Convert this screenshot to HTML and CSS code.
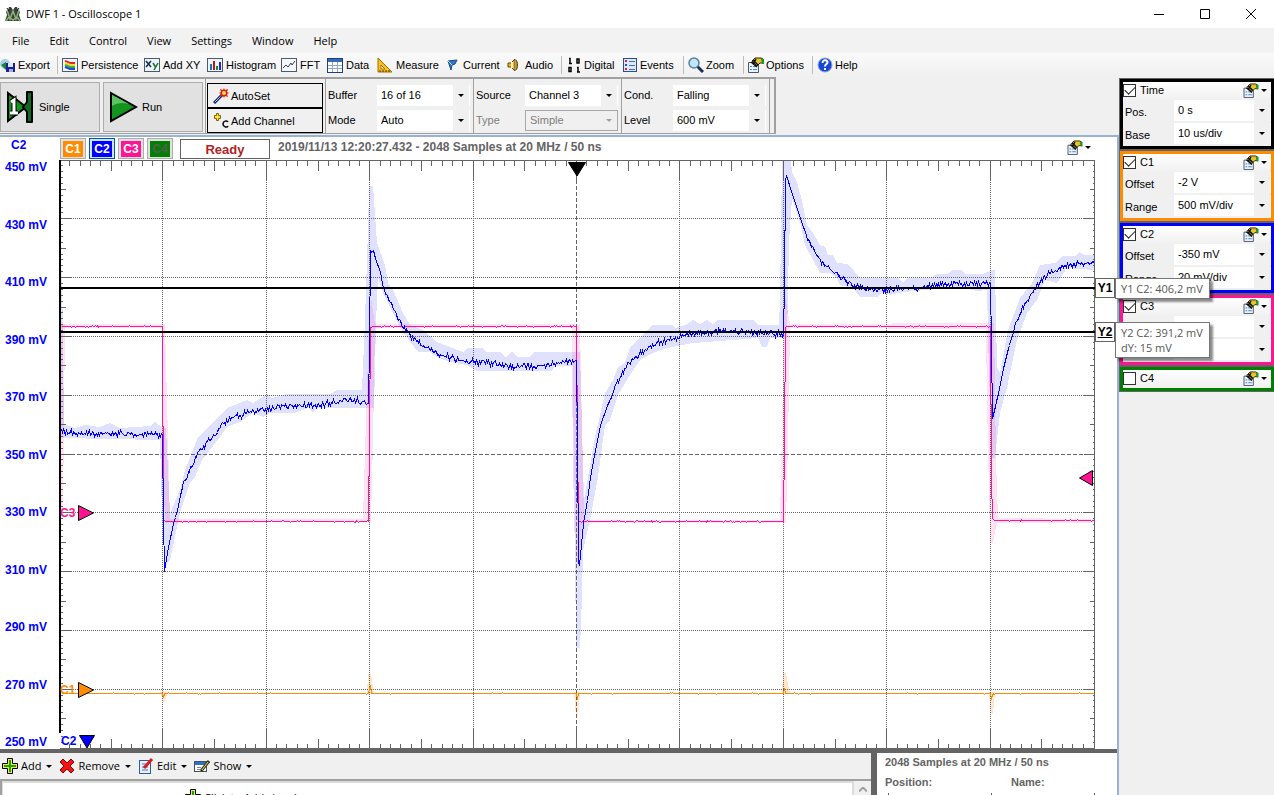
FILE: index.html
```html
<!DOCTYPE html>
<html lang="en">
<head>
<meta charset="utf-8">
<title>DWF 1 - Oscilloscope 1</title>
<link rel="stylesheet" href="styles.css">
</head>
<body>
<svg class="defs" aria-hidden="true">
  <symbol id="i-options" viewBox="0 0 16 16">
    <path d="M.5 5.500h10v10H.5z" fill="#e9f1fb" stroke="#4c5866"/>
    <path d="M2 9.500h2M2 12.500h2M5 9.500h4M5 12.500h4" stroke="#4a86c8"/>
    <path d="M4 4l3-3h6l2 1v4h-3L9 9z" fill="#e9c52b" stroke="#2c2606"/>
    <path d="M3 5l6 5M5 3l5 5M8 2l-3 5" stroke="#111" stroke-width="1.500"/><path d="M13 2h3v5h-2z" fill="#1b9a2c"/>
  </symbol>
  <symbol id="i-plus" viewBox="0 0 16 16">
    <path d="M5.500.500h5v5h5v5h-5v5h-5v-5h-5v-5h5z" fill="#f7e64a" stroke="#000"/>
    <path d="M7 2h2v5h5v2H9v5H7V9H2V7h5z" fill="#12a512"/>
  </symbol>
</svg>

<header class="titlebar">
  <svg class="app-icon" viewBox="0 0 16 16"><path d="M4 1h2l2 3 2-3h2l1 3 2 2-1 3 2 6H0l2-6-1-3 2-2z" fill="#39423a"/><path d="M2 4l3 9 3-8 3 8 3-9M1 15l3-4 4 3 4-3 3 4" fill="none" stroke="#8cb07c" stroke-width="1.500"/><path d="M2 2l2 3M14 2l-2 3" stroke="#111"/></svg>
  <h1 class="title">DWF 1 - Oscilloscope 1</h1>
  <button class="win-btn" aria-label="Minimize"><svg viewBox="0 0 10 10"><path d="M0 5.500h10"/></svg></button>
  <button class="win-btn" aria-label="Maximize"><svg viewBox="0 0 10 10"><path d="M.500.500h9v9h-9z"/></svg></button>
  <button class="win-btn" aria-label="Close"><svg viewBox="0 0 10 10"><path d="M0 0l10 10M10 0L0 10"/></svg></button>
</header>

<nav class="menubar">
  <button>File</button><button>Edit</button><button>Control</button><button>View</button><button>Settings</button><button>Window</button><button>Help</button>
</nav>

<div class="toolbar">
  <button class="tool tool-export"><svg viewBox="0 0 16 16"><circle cx="5" cy="7" r="5" fill="#a9cfe8"/><path d="M1 8l5-3v3h3v2H6v3z" fill="#18852b"/><rect x="6" y="6" width="9" height="9" fill="#16219a"/><rect x="8" y="6" width="5" height="4" fill="#dfe6fa"/><rect x="9" y="12" width="4" height="3" fill="#a8b0c8"/></svg>Export</button>
  <button class="tool sep tool-persistence"><svg viewBox="0 0 16 16"><rect x=".5" y="1.500" width="15" height="13" fill="#f4f6fb" stroke="#4c5a70"/><path d="M3 4l5 2h5" stroke="#e22" stroke-width="2" fill="none"/><path d="M3 6l5 2h5" stroke="#f5df28" stroke-width="2" fill="none"/><path d="M3 8l5 2h5" stroke="#2ab43c" stroke-width="2" fill="none"/><path d="M3 10l5 2h5" stroke="#2544e0" stroke-width="2" fill="none"/></svg>Persistence</button>
  <button class="tool tool-xy"><svg viewBox="0 0 16 16"><rect x=".5" y="1.500" width="15" height="13" fill="#eef4fb" stroke="#4c5a70"/><path d="M2 4l5 6M7 4l-5 6" stroke="#152a5c" stroke-width="1.500"/><path d="M9 6l2.500 4M14 6l-4 7" stroke="#1c6e20" stroke-width="1.500"/></svg>Add XY</button>
  <button class="tool tool-histogram"><svg viewBox="0 0 16 16"><rect x=".5" y="1.500" width="15" height="13" fill="#eef4fb" stroke="#4c5a70"/><rect x="3" y="7" width="2" height="6" fill="#17a"/><rect x="6" y="4" width="2" height="9" fill="#c11"/><rect x="9" y="9" width="2" height="4" fill="#183"/><rect x="12" y="5" width="2" height="8" fill="#22c"/></svg>Histogram</button>
  <button class="tool tool-fft"><svg viewBox="0 0 16 16"><rect x=".5" y="1.500" width="15" height="13" fill="#f4f7fb" stroke="#4c5a70"/><path d="M2 11l3-3 2 2 3-4 1 2 3-4" fill="none" stroke="#36425c"/></svg>FFT</button>
  <button class="tool tool-data"><svg viewBox="0 0 16 16"><rect x=".5" y="1.500" width="15" height="14" fill="#fff" stroke="#1e3f78"/><rect x="1" y="2" width="14" height="3" fill="#3868b8"/><path d="M5.500 5v10M10.500 5v10M1 8.500h14M1 11.500h14" stroke="#93a9c9"/></svg>Data</button>
  <button class="tool tool-measure"><svg viewBox="0 0 16 16"><path d="M1 1l14 14H1z" fill="#f8c21c" stroke="#a86a00"/><path d="M4 8l4 4H4z" fill="#fff" stroke="#a86a00"/><path d="M3 15v-2M6 15v-2M9 15v-2M12 15v-2" stroke="#5b3a00"/></svg>Measure</button>
  <button class="tool tool-current"><svg viewBox="0 0 16 16"><path d="M3 4l9-1-2 4-3 1-1 5z" fill="#2f78c8" stroke="#174a87"/><path d="M3 4l4 4" stroke="#bcdcff"/></svg>Current</button>
  <button class="tool tool-audio"><svg viewBox="0 0 16 16"><path d="M1 6h3l4-4v12l-4-4H1z" fill="#f0b92c" stroke="#5b4208"/><path d="M5 5v6" stroke="#fff3b8" stroke-width="2"/><path d="M9 3c2 2 2 8 0 10" fill="#c98d10" stroke="#5b4208"/></svg>Audio</button>
  <button class="tool sep tool-digital"><svg viewBox="0 0 16 16"><path d="M3 1.500h1V6M3 6.500h3M11 2h2v4h-2zM3 10.500h2v4H3zM11 10.500h1V15M11 15h3" fill="none" stroke="#000" stroke-width="1.500"/></svg>Digital</button>
  <button class="tool tool-events"><svg viewBox="0 0 16 16"><rect x="1.500" y="1.500" width="13" height="13" fill="#dce9fa" stroke="#2c4f8c"/><path d="M3 4h2M3 12h2" stroke="#d22" stroke-width="2"/><path d="M3 8h2" stroke="#25b" stroke-width="2"/><path d="M7 4.500h6M7 8.500h6M7 12.500h6" stroke="#4a6ea8"/></svg>Events</button>
  <button class="tool sep tool-zoom"><svg viewBox="0 0 16 16"><path d="M9 9l6 6" stroke="#1d2f5a" stroke-width="3"/><circle cx="6" cy="6" r="5" fill="#bfe6fa" stroke="#5c7ea0" stroke-width="1.500"/></svg>Zoom</button>
  <button class="tool sep tool-options"><svg><use href="#i-options"/></svg>Options</button>
  <button class="tool sep tool-help"><svg viewBox="0 0 16 16"><circle cx="8" cy="8" r="7" fill="#1746d8" stroke="#8fa6d8"/><path d="M5.500 6c0-4 5-3 5-.5C10.500 7 8 7 8 9.500M8 11v2" fill="none" stroke="#fff" stroke-width="2"/></svg>Help</button>
</div>

<div class="workspace">
  <main class="left">
    <div class="controls">
      <div class="run-group">
        <button class="big-btn"><svg viewBox="0 0 30 34"><path d="M3 3l18 14L3 31z" fill="#14931f" stroke="#000" stroke-width="2"/><path d="M22 2h5v30h-5V22l-4-5 4-5z" fill="#0f6a1c" stroke="#000" stroke-width="2" stroke-linejoin="round"/><path d="M6 12l3-2v13M5 23h8" fill="none" stroke="#000" stroke-width="5"/><path d="M6 12l3-2v13M5 23h8" fill="none" stroke="#fff" stroke-width="3"/></svg>Single</button>
        <button class="big-btn"><svg viewBox="0 0 30 34"><path d="M3 3l25 14L3 31z" fill="#14931f" stroke="#000" stroke-width="2"/><path d="M4 5l17 9C14 12 9 13 4 16z" fill="#5ec265"/></svg>Run</button>
      </div>
      <div class="auto-group">
        <button class="mid-btn"><svg viewBox="0 0 16 16"><path d="M1 15l8-8" stroke="#19256b" stroke-width="3"/><path d="M2 14l6-6" stroke="#a8c4ff"/><path d="M11 0l1 2 3-1-1 3 2 1-2 1 1 3-3-1-1 2-1-2-3 1 1-3-2-1 2-1-1-3 3 1z" fill="#e21b1b"/><circle cx="11" cy="5" r="2" fill="#ffe838"/></svg>AutoSet</button>
        <button class="mid-btn"><svg viewBox="0 0 16 16"><path d="M3.500.500h2v2h2v3h-2v2h-2v-2h-2v-3h2z" fill="#ffe24a" stroke="#7c6400"/><path d="M15 9c-1-2-5-1-5 2s4 4 5 2" fill="none" stroke="#000" stroke-width="1.500"/></svg>Add Channel</button>
      </div>
      <div class="field-group">
        <label for="buffer">Buffer</label><span class="combo"><select id="buffer"><option>16 of 16</option></select></span>
        <label for="mode">Mode</label><span class="combo"><select id="mode"><option>Auto</option></select></span>
      </div>
      <div class="field-group">
        <label for="source">Source</label><span class="combo"><select id="source"><option>Channel 3</option></select></span>
        <label class="off" for="type">Type</label><span class="combo off"><select id="type" disabled><option>Simple</option></select></span>
      </div>
      <div class="field-group">
        <label for="cond">Cond.</label><span class="combo"><select id="cond"><option>Falling</option></select></span>
        <label for="level">Level</label><span class="combo"><select id="level"><option>600 mV</option></select></span>
      </div>
      <div class="grip"></div>
    </div>

    <section class="scope">
      <div class="scope-head">
        <span class="axis-name">C2</span>
        <button class="tag tag-c1">C1</button>
        <button class="tag tag-c2 active">C2</button>
        <button class="tag tag-c3">C3</button>
        <button class="tag tag-c4">C4</button>
        <output class="status">Ready</output>
        <span class="capture">2019/11/13 12:20:27.432 - 2048 Samples at 20 MHz / 50 ns</span>
        <button class="opt-btn" aria-label="Plot options"><svg><use href="#i-options"/></svg></button>
      </div>
      <div class="plot-row">
        <div class="scale">
          <span>450 mV</span><span>430 mV</span><span>410 mV</span><span>390 mV</span><span>370 mV</span><span>350 mV</span><span>330 mV</span><span>310 mV</span><span>290 mV</span><span>270 mV</span><span>250 mV</span>
        </div>
        <svg id="plot" class="plot" viewBox="59 160 1036 589" preserveAspectRatio="none"></svg>
        <div class="cursors">
          <div class="cursor cursor-y1"><span class="handle">Y1</span><span class="tip">Y1 C2: 406,2 mV</span></div>
          <div class="cursor cursor-y2"><span class="handle"><u>Y2</u></span><span class="tip">Y2 C2: 391,2 mV<br>dY: 15 mV</span></div>
        </div>
      </div>
      <div class="bottom">
        <div class="list-pane">
          <div class="list-tools">
            <button class="drop"><svg><use href="#i-plus"/></svg>Add</button>
            <button class="drop"><svg viewBox="0 0 16 16"><path d="M1 4l3-3 4 4 4-4 3 3-4 4 4 4-3 3-4-4-4 4-3-3 4-4z" fill="#f31414" stroke="#8a0000"/></svg>Remove</button>
            <button class="drop"><svg viewBox="0 0 16 16"><rect x="1.500" y="2.500" width="11" height="13" fill="#e8f0fc" stroke="#315caa"/><path d="M4 6h5M4 9h6M4 12h6" stroke="#4b78c4"/><path d="M6 10l8-9" stroke="#d81e1e" stroke-width="3"/></svg>Edit</button>
            <button class="drop"><svg viewBox="0 0 16 16"><rect x=".5" y="3.500" width="12" height="10" fill="#fff" stroke="#42506c"/><rect x="1" y="4" width="11" height="3" fill="#2f6fc4"/><path d="M3 9.500h4M3 11.500h3" stroke="#789"/><path d="M7 13l8-10" stroke="#3d3a18" stroke-width="3"/><path d="M8 12l6-8" stroke="#f1dd62"/></svg>Show</button>
          </div>
          <div class="list">
            <div class="list-body"><svg><use href="#i-plus"/></svg>Click to Add signals</div>
            <button class="scroll-up" aria-label="Scroll up"><svg viewBox="0 0 8 5"><path d="M0 4.500l4-4 4 4"/></svg></button>
          </div>
        </div>
        <div class="info-pane">
          <p>2048 Samples at 20 MHz / 50 ns</p>
          <p class="cols"><span>Position:</span><span>Name:</span></p>
          <div class="rules"></div>
        </div>
      </div>
    </section>
  </main>

  <aside class="side">
    <div class="channels">
      <fieldset class="channel ch-time">
        <div class="ch-head"><label><input type="checkbox" checked>Time</label><button class="opt-btn" aria-label="Time options"><svg><use href="#i-options"/></svg></button></div>
        <div class="ch-row"><label for="pos">Pos.</label><span class="combo"><select id="pos"><option>0 s</option></select></span></div>
        <div class="ch-row"><label for="base">Base</label><span class="combo"><select id="base"><option>10 us/div</option></select></span></div>
      </fieldset>
      <fieldset class="channel ch-1">
        <div class="ch-head"><label><input type="checkbox" checked>C1</label><button class="opt-btn" aria-label="C1 options"><svg><use href="#i-options"/></svg></button></div>
        <div class="ch-row"><label for="o1">Offset</label><span class="combo"><select id="o1"><option>-2 V</option></select></span></div>
        <div class="ch-row"><label for="r1">Range</label><span class="combo"><select id="r1"><option>500 mV/div</option></select></span></div>
      </fieldset>
      <fieldset class="channel ch-2">
        <div class="ch-head"><label><input type="checkbox" checked>C2</label><button class="opt-btn" aria-label="C2 options"><svg><use href="#i-options"/></svg></button></div>
        <div class="ch-row"><label for="o2">Offset</label><span class="combo"><select id="o2"><option>-350 mV</option></select></span></div>
        <div class="ch-row"><label for="r2">Range</label><span class="combo"><select id="r2"><option>20 mV/div</option></select></span></div>
      </fieldset>
      <fieldset class="channel ch-3">
        <div class="ch-head"><label><input type="checkbox" checked>C3</label><button class="opt-btn" aria-label="C3 options"><svg><use href="#i-options"/></svg></button></div>
        <div class="ch-row"><span></span><span class="combo"><select id="o3" aria-label="Offset"><option>-1 V</option></select></span></div>
        <div class="ch-row"><span></span><span class="combo"><select id="r3" aria-label="Range"></select></span></div>
      </fieldset>
      <fieldset class="channel ch-4">
        <div class="ch-head"><label><input type="checkbox">C4</label><button class="opt-btn" aria-label="C4 options"><svg><use href="#i-options"/></svg></button></div>
      </fieldset>
    </div>
  </aside>
</div>
<script src="plot.js"></script>
</body>
</html>
```
FILE: styles.css
```css
* { box-sizing: border-box; }
body {
  margin: 0;
  height: 100vh;
  display: flex;
  flex-direction: column;
  overflow: hidden;
  background: #f0f0f0;
  color: #000;
  font: 11px/14px "Liberation Sans", Arial, sans-serif;
}
button, select, input { font: inherit; color: inherit; margin: 0; }
button { border: 0; padding: 0; background: none; white-space: nowrap; }
svg { display: block; flex: none; }
.defs { position: absolute; width: 0; height: 0; }

.titlebar {
  display: flex;
  align-items: center;
  height: 28px;
  flex: none;
  padding-left: 5px;
  background: #fff;
  font-family: "Open Sans", sans-serif;
}
.app-icon { width: 16px; height: 16px; }
.title { flex: 1; margin: 0 0 0 5px; font-size: 11px; font-weight: 400; }
.win-btn { width: 46px; height: 28px; display: grid; place-items: center; }
.win-btn svg { width: 10px; height: 10px; fill: none; stroke: #000; }

.menubar {
  display: flex;
  gap: 20px;
  height: 25px;
  flex: none;
  padding-left: 12px;
  background: #f2f2f2;
  font-family: "Open Sans", sans-serif;
}

.toolbar {
  display: flex;
  align-items: center;
  height: 24px;
  flex: none;
  background: linear-gradient(#fafafa, #f0f0f0);
}
.tool { display: flex; align-items: center; gap: 3px; height: 18px; }
.tool svg { width: 16px; height: 16px; }
.sep { border-left: 1px solid #bdbdbd; padding-left: 4px; }
.tool-export { width: 57px; gap: 2px; }
.tool-persistence { width: 87px; }
.tool-xy { width: 63px; }
.tool-histogram { width: 74px; }
.tool-fft { width: 46px; }
.tool-data { width: 50px; }
.tool-measure { width: 68px; }
.tool-current { width: 62px; gap: 2px; }
.tool-audio { width: 54px; gap: 2px; }
.tool-digital { width: 61px; gap: 2px; }
.tool-events { width: 61px; gap: 2px; }
.tool-zoom { width: 60px; gap: 2px; }
.tool-options { width: 69px; gap: 2px; }
.tool-help { gap: 2px; }

.workspace { flex: 1; display: flex; min-height: 0; }
.left { flex: 1; display: flex; flex-direction: column; min-width: 0; }

.controls {
  display: flex;
  align-self: flex-start;
  height: 57px;
  flex: none;
  border: solid #a0a0a0;
  border-width: 2px 2px 1px 0;
  margin-bottom: 1px;
}
.run-group { display: flex; gap: 3px; padding: 3px 2px 1px 0; }
.big-btn {
  display: flex;
  align-items: center;
  gap: 4px;
  width: 100px;
  padding-left: 4px;
  border: 1px solid #adadad;
  background: #e1e1e1;
}
.big-btn svg { width: 30px; height: 34px; }
.auto-group {
  display: flex;
  flex-direction: column;
  border-left: 1px solid #a0a0a0;
  padding: 4px 2px 0 1px;
}
.mid-btn {
  display: flex;
  align-items: center;
  gap: 2px;
  flex: 1;
  width: 116px;
  padding-left: 5px;
  border: 1px solid #000;
  background: #f0f0f0;
}
.mid-btn svg { width: 16px; height: 16px; }
.field-group {
  display: grid;
  grid-template-columns: 49px 93px;
  grid-template-rows: 22px 22px;
  row-gap: 3px;
  align-items: center;
  padding: 5px 3px 0 2px;
  border-left: 1px solid #a0a0a0;
}
.grip { width: 5px; border-left: 1px solid #a0a0a0; }
.off { color: #7d7d7d; }
.combo { position: relative; display: block; height: 21px; background: #fff; }
.combo select {
  display: block;
  appearance: none;
  width: 100%;
  height: 21px;
  border: 0;
  border-right: 1px solid #fff;
  border-radius: 0;
  padding: 0 18px 1px 4px;
  background: linear-gradient(90deg, #fff calc(100% - 16px), #f0f0f0 calc(100% - 16px));
}
.combo.off select {
  border: 1px solid #a8a8a8;
  background: #f0f0f0;
  color: #7d7d7d;
  opacity: 1;
}
.combo::after, .opt-btn::after, .drop::after {
  content: "";
  border: 3px solid transparent;
  border-top-color: #000;
  border-bottom: 0;
}
.combo::after { position: absolute; right: 6px; top: 9px; pointer-events: none; }
.combo.off::after { border-top-color: #a0a0a0; }

.scope {
  flex: 1;
  display: flex;
  flex-direction: column;
  min-height: 0;
  border-top: 2px solid #99b4d1;
  border-right: 2px solid #99b4d1;
  background: #fff;
}
.scope-head { display: flex; height: 23px; flex: none; align-items: flex-start; padding-top: 1px; font-weight: 700; }
.axis-name { width: 60px; padding-left: 11px; color: #00f; font-size: 12px; }
.tag {
  width: 26px;
  height: 21px;
  margin-right: 3px;
  padding: 2px;
  border: 1px solid #adadad;
  background: linear-gradient(var(--c), var(--c)) center / 20px 16px no-repeat #e1e1e1;
  color: #fff;
  font-weight: 700;
  font-size: 12px;
}
.tag.active { border-color: #0058a0; background-color: #cce4f7; }
.tag-c1 { --c: #ff8c00; }
.tag-c2 { --c: #00f; }
.tag-c3 { --c: #ff1493; }
.tag-c4 { --c: #008000; color: #5a5a5a; }
.status {
  width: 90px;
  height: 20px;
  margin: 1px 8px 0 4px;
  border: 1px solid #646464;
  color: #b22222;
  font-size: 13px;
  line-height: 19px;
  text-align: center;
}
.capture { flex: 1; color: #646464; padding-top: 2px; font-size: 12px; }
.opt-btn { display: flex; align-items: center; gap: 2px; }
.opt-btn svg { width: 16px; height: 15px; }
.scope-head .opt-btn { padding: 2px 26px 0 0; }

.plot-row { flex: 1; display: flex; position: relative; min-height: 0; }
.scale {
  width: 59px;
  display: flex;
  flex-direction: column;
  justify-content: space-between;
  padding-right: 12px;
  text-align: right;
  color: #00f;
  font-size: 12px;
  font-weight: 700;
}
.plot { flex: 1; min-width: 0; height: 100%; }
.marker-text { font: 700 12px "Liberation Sans", sans-serif; }
.cursors { width: 22px; }
.cursor { position: absolute; right: -98px; display: flex; align-items: flex-start; width: 120px; z-index: 2; }
.cursor-y1 { top: 20%; }
.cursor-y2 { top: 27.5%; }
.handle {
  width: 20px;
  height: 20px;
  border: 1px solid #646464;
  background: #fff;
  font-size: 12px;
  font-weight: 700;
  line-height: 18px;
  text-align: center;
}
.tip {
  padding: 2px 6px 2px 5px;
  border: 1px solid #767676;
  background: #fff;
  box-shadow: 3px 3px 2px rgba(0, 0, 0, .45);
  color: #575757;
  font: 11px/15px "Open Sans", sans-serif;
  white-space: nowrap;
}

.bottom { display: flex; height: 46px; flex: none; border-top: 4px solid #646464; }
.list-pane { flex: 1; min-width: 0; background: #f0f0f0; overflow: hidden; }
.list-tools { display: flex; align-items: center; gap: 7px; height: 26px; padding-left: 2px; font-family: "Open Sans", sans-serif; }
.drop { display: flex; align-items: center; gap: 3px; }
.drop svg { width: 16px; height: 16px; }
.drop::after { margin-left: 2px; }
.list { display: flex; border-top: 2px solid #a0a0a0; border-left: 2px solid #a0a0a0; }
.list-body {
  flex: 1;
  display: flex;
  gap: 3px;
  height: 40px;
  padding: 6px 0 0 182px;
  border: 2px solid #dcdcdc;
  border-left-width: 1px;
  background: #fff;
  font: 11px/18px "Open Sans", sans-serif;
}
.list-body svg { width: 16px; height: 16px; }
.scroll-up { width: 17px; height: 16px; display: grid; place-items: center; }
.scroll-up svg { width: 8px; height: 5px; fill: none; stroke: #a0a0a0; stroke-width: 2; }
.info-pane {
  width: 246px;
  border-left: 6px solid #646464;
  padding: 2px 0 0 8px;
  color: #646464;
  font-weight: 700;
  overflow: hidden;
}
.info-pane p { margin: 0 0 6px; }
.info-pane .cols { display: flex; margin-bottom: 4px; }
.cols span { width: 126px; flex: none; }
.rules { height: 2px; margin-left: 3px; background: repeating-linear-gradient(90deg, #646464 0 1px, transparent 1px 103px); }

.side { width: 155px; flex: none; }
.channels {
  display: flex;
  flex-direction: column;
  gap: 2px;
  margin-top: 1px;
  padding: 1px 0 1px 1px;
  background: #646464;
}
.channel { min-width: 0; margin: 0; padding: 0; border: 3px solid var(--c); background: #f0f0f0; }
.ch-time { --c: #000; }
.ch-1 { --c: #ff8c00; }
.ch-2 { --c: #00f; }
.ch-3 { --c: #ff1493; }
.ch-4 { --c: #008000; }
.ch-head {
  display: flex;
  justify-content: space-between;
  align-items: center;
  height: 18px;
  padding: 0 4px 2px 0;
  background: linear-gradient(#fff, #f0f0f0);
}
.ch-head label { display: flex; align-items: center; gap: 4px; }
.ch-head input {
  appearance: none;
  width: 13px;
  height: 13px;
  border: 1px solid #333;
  background: #fff;
  display: grid;
  place-items: center;
}
.ch-head input:checked::after {
  content: "";
  width: 9px;
  height: 5px;
  border: solid #222;
  border-width: 0 0 1px 1px;
  transform: translateY(-1px) rotate(-45deg);
}
.ch-row { display: grid; grid-template-columns: 49px 1fr; align-items: start; height: 23px; padding-left: 2px; }
.ch-row label { padding-top: 5px; }
```
FILE: plot.js
```js
// Screen-space drawing of the acquired channels.
const svg = document.getElementById('plot');
const NS = 'http://www.w3.org/2000/svg';
const L = 59.5, T = 160.5, DX = 103.4, DY = 58.8, R = 1094.5, B = 748.5;

function add(tag, attrs, text) {
  const e = document.createElementNS(NS, tag);
  for (const k in attrs) e.setAttribute(k, attrs[k]);
  if (text) e.textContent = text;
  svg.appendChild(e);
  return e;
}
let seed = 7;
function rnd() { seed = (seed * 16807) % 2147483647; return seed / 2147483647; }
const px = v => Math.floor(v) + 0.5;
const crisp = { 'shape-rendering': 'crispEdges', fill: 'none' };
function poly(points, fill) { add('polygon', { points, fill, 'shape-rendering': 'crispEdges' }); }

// Min/max envelopes
poly('61,423 75,428 85,425 100,427 110,423 120,428 150,426 155,422 162,427 166,428 170,513 180,490 185,470 198,437 213,423 227,408 247,400 253,403 267,394 272,398 287,394 330,394 337,390 362,390 365,320 368,230 369,186 373,186 377,243 385,265 388,283 393,290 403,313 410,325 423,330 437,342 450,347 463,352 468,348 482,348 487,352 500,352 506,357 512,352 517,357 530,357 534,352 580,352 582,427 584,500 588,477 595,437 605,393 613,380 618,367 625,363 630,348 640,337 653,325 672,325 675,328 687,324 693,320 700,324 707,320 713,324 717,320 753,320 758,325 779,325 780,300 782,161 791,161 792,172 797,182 803,205 807,225 813,233 820,245 825,247 828,255 833,255 837,263 848,264 860,278 898,278 903,282 907,278 930,278 937,274 947,274 953,270 962,270 965,274 983,274 992,270 995,270 997,367 1000,373 1008,330 1020,298 1032,283 1040,265 1055,263 1062,256 1075,256 1079,252 1085,255 1094,255 1094,270 1067,268 1057,283 1045,280 1037,300 1027,313 1017,340 1007,387 1000,413 995,458 992,458 989,373 987,290 977,291 960,287 903,292 890,295 883,292 877,297 860,297 853,288 840,285 837,278 830,273 820,273 805,245 800,222 792,198 789,242 787,338 770,338 767,347 762,347 758,338 693,343 672,347 655,352 640,360 630,375 618,395 610,420 605,425 598,477 590,520 583,550 582,597 580,648 576,648 575,553 573,467 572,366 555,366 552,371 477,371 467,365 450,362 437,357 430,352 418,352 410,342 400,327 383,293 378,277 376,323 374,408 317,408 313,413 308,408 295,413 270,413 263,417 253,413 240,422 227,427 220,437 202,460 195,477 190,483 180,513 170,560 165,567 162,513 160,440 61,438', '#e0e0ff');
poly('61,270 62,270 64,425 61,425', '#e0e0ff');
const pink = 'rgba(255,20,147,.13)';
poly('61,324 65,324 63,513 61,513', pink);
poly('61,324 165,324 167,400 170,519 363,519 366,420 369,325 371,298 375,324 580,324 582,427 584,520 780,520 782,430 784,325 785,296 790,324 994,323 996,460 998,518 1094,519 1094,523 997,523 993,543 990,543 987,400 986,329 790,328 788,440 786,523 582,523 579,568 576,560 573,400 572,328 375,328 373,440 371,522 165,523 162,420 162,328 61,328', pink);
poly('160,691 168,692 164,704', '#ffe6c8');
poly('368,674 371,674 374,694 367,694', '#ffe6c8');
poly('574,692 580,692 578,716 576,716', '#ffe6c8');
poly('783,673 786,673 790,694 782,694', '#ffe6c8');
poly('989,692 995,692 993,714 991,714', '#ffe6c8');

// Graticule
for (let i = 1; i < 10; i++) {
  const x = px(L + i * DX), y = px(T - 0.5 + i * DY);
  const dash = i === 5 ? '4 2' : '1 1';
  add('path', { ...crisp, d: `M${x} 180V729`, stroke: '#646464', 'stroke-dasharray': dash });
  add('path', { ...crisp, d: `M71 ${y}H1084`, stroke: '#646464', 'stroke-dasharray': dash });
}
let d = `M${L} ${T}H${R}V${B}H${L}`;
for (let i = 1; i < 100; i++) {
  const x = px(L + i * DX / 10), y = px(T - 0.5 + i * DY / 10);
  const h = i % 10 === 0 ? 20 : i % 5 === 0 ? 10 : 5;
  const w = i % 10 === 0 ? 11 : i % 5 === 0 ? 5 : 2;
  d += `M${x} ${T}v${h}M${x} ${B}v-${h}M61 ${y}h${w}M${R} ${y}h-${w}`;
}
add('path', { ...crisp, d, stroke: '#646464' });
add('path', { ...crisp, d: 'M60 160V733', stroke: '#000', 'stroke-width': 2 });

// Traces
function trace(pts, noise, color) {
  let out = '';
  for (let i = 0; i < pts.length - 1; i++) {
    const [x0, y0] = pts[i], [x1, y1] = pts[i + 1];
    const n = Math.max(1, x1 - x0);
    for (let k = 0; k < n; k++) {
      const y = y0 + (y1 - y0) * k / n;
      const amp = Math.abs(y1 - y0) > 2.5 * n ? 0 : noise;
      out += `${out ? 'L' : 'M'}${x0 + k + .5} ${Math.round(y + (rnd() + rnd() - 1) * amp) + .5}`;
    }
  }
  const e = pts[pts.length - 1];
  add('path', { ...crisp, d: out + `L${e[0]} ${e[1]}`, stroke: color });
}
trace([[61,693],[162,693],[163,697],[164,693],[368,693],[369,688],[370,686],[371,693],[576,693],[577,699],[578,693],[783,693],[784,688],[785,693],[990,693],[991,698],[993,693],[1094,693]], .6, '#ff8c00');
trace([[61,326],[162,326],[163,520],[165,521],[368,521],[369,434],[370,327],[372,326],[576,326],[577,440],[578,521],[783,521],[784,440],[785,327],[787,326],[990,326],[991,478],[992,518],[994,520],[1094,520]], .8, '#ff1493');
trace([[61,432],[110,433],[162,434],[163,518],[164,571],[168,547],[173,523],[177,510],[180,495],[183,483],[190,468],[198,453],[205,443],[213,435],[223,423],[233,416],[250,412],[267,408],[293,405],[320,405],[350,399],[368,403],[369,345],[370,249],[373,250],[375,258],[380,272],[383,288],[390,303],[397,317],[403,328],[410,334],[420,345],[430,349],[440,354],[453,358],[473,362],[493,363],[510,366],[540,366],[560,362],[576,360],[577,440],[578,563],[579,565],[583,523],[587,500],[590,477],[595,450],[600,425],[608,402],[617,380],[628,363],[640,352],[657,342],[673,338],[690,333],[720,331],[740,331],[760,333],[783,334],[784,285],[785,178],[787,178],[790,188],[800,218],[807,238],[813,248],[822,263],[837,275],[853,285],[870,289],[903,289],[923,287],[950,283],[970,283],[990,283],[991,345],[992,418],[998,393],[1003,368],[1008,348],[1015,325],[1022,308],[1032,292],[1043,277],[1060,267],[1077,263],[1094,263]], 4, '#0000ff');

// Cursors and markers
add('path', { ...crisp, d: 'M60 288H1095M60 332H1095', stroke: '#000', 'stroke-width': 2 });
const mark = (points, fill) => add('polygon', { points, fill, stroke: '#000' });
mark('568.5,162.500 585.5,162.500 577,176', '#000');
mark('78.5,505.500 78.5,520.500 93.5,513', '#ff1493');
mark('78.5,682.500 78.5,697.500 93.5,690', '#ff8c00');
mark('79.5,735.500 94.5,735.500 87,748', '#00f');
mark('1092.5,470.500 1092.5,485.500 1079.5,478', '#ff1493');
add('text', { class: 'marker-text', x: 60, y: 517, fill: '#ff1493' }, 'C3');
add('text', { class: 'marker-text', x: 60, y: 694, fill: '#ff8c00' }, 'C1');
add('text', { class: 'marker-text', x: 61, y: 745, fill: '#00f' }, 'C2');
```
